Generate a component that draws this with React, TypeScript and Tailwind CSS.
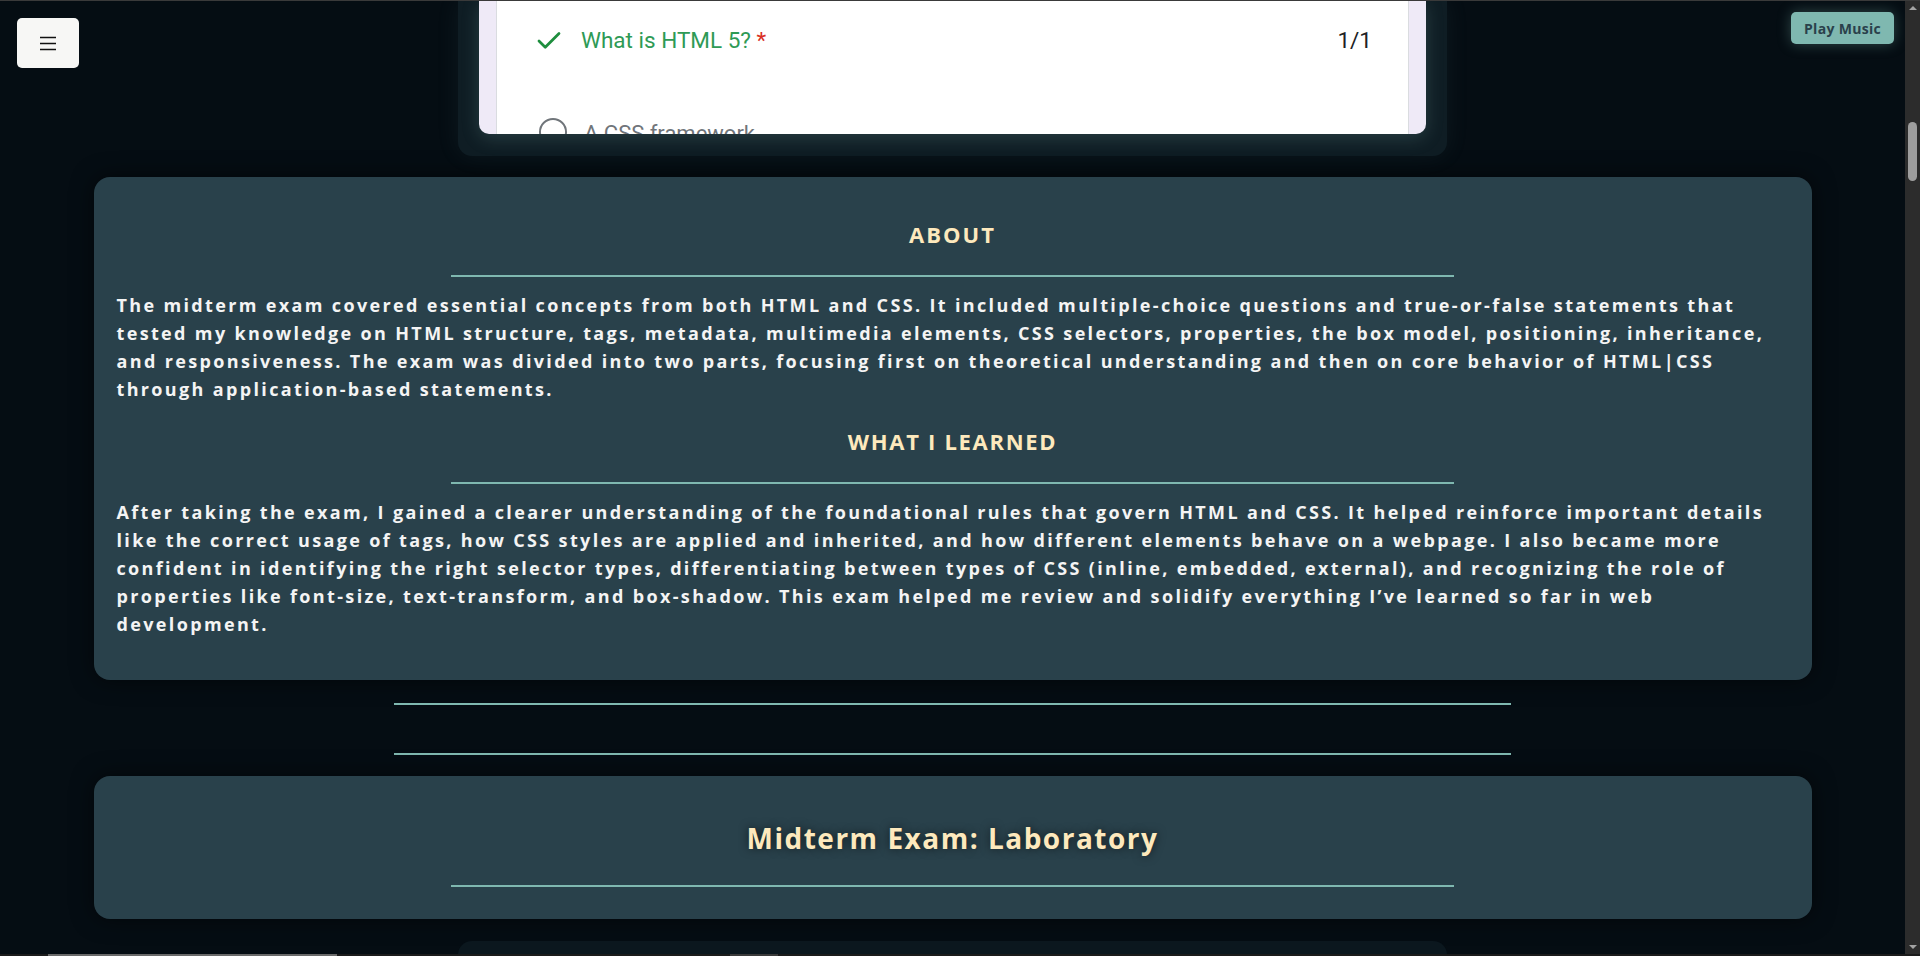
import { Check } from "lucide-react";

const ABOUT_TEXT =
  "The midterm exam covered essential concepts from both HTML and CSS. It included multiple-choice questions and true-or-false statements that tested my knowledge on HTML structure, tags, metadata, multimedia elements, CSS selectors, properties, the box model, positioning, inheritance, and responsiveness. The exam was divided into two parts, focusing first on theoretical understanding and then on core behavior of HTML|CSS through application-based statements.";

const LEARNED_TEXT =
  "After taking the exam, I gained a clearer understanding of the foundational rules that govern HTML and CSS. It helped reinforce important details like the correct usage of tags, how CSS styles are applied and inherited, and how different elements behave on a webpage. I also became more confident in identifying the right selector types, differentiating between types of CSS (inline, embedded, external), and recognizing the role of properties like font-size, text-transform, and box-shadow. This exam helped me review and solidify everything I’ve learned so far in web development.";

export default function App() {
  return (
    <div className="flex h-[956px] w-full flex-col overflow-hidden bg-[#050d13]">
      {/* browser chrome edge */}
      <div className="h-px w-full shrink-0 bg-[#3a3a3a]" />

      <div className="flex min-h-0 flex-1">
        <main className="relative min-w-0 flex-1 overflow-hidden">
          {/* Menu button */}
          <button className="absolute left-[17px] top-[17px] z-20 flex h-[50px] w-[62px] items-center justify-center rounded-[5px] bg-[#f7f7f5]">
            <svg width="16" height="15" viewBox="0 0 16 15" fill="none">
              <path d="M0 1.5h16M0 7.5h16M0 13.5h16" stroke="#111" strokeWidth="1.6" />
            </svg>
          </button>

          {/* Play music */}
          <button className="absolute right-[11px] top-[11px] z-20 flex h-[32px] w-[103px] items-center justify-center rounded-[5px] bg-[#7fb8b0] text-[14px] font-bold tracking-[0.3px] text-[#2a414b] shadow-[0_0_14px_rgba(127,184,176,0.35)] [font-family:'Open_Sans',sans-serif]">
            Play Music
          </button>

          <div className="flex flex-col items-center">
            {/* Embedded exam screenshot (scrolled) */}
            <div className="h-[155px] w-[989px] rounded-b-[14px] bg-[#0f1d24] px-[21px] shadow-[0_0_24px_rgba(127,184,176,0.08)]">
              <div className="h-[133px] overflow-hidden rounded-b-[10px] bg-[#efeaf7] px-[17px] shadow-[0_4px_18px_rgba(127,184,176,0.22)] [font-family:Roboto,'Noto_Sans',sans-serif]">
                <div className="h-full border-x border-[#dadce0] bg-white pl-[37px] pr-[36px]">
                  <div className="flex h-[80px] items-start pt-[25px]">
                    <Check size={30} strokeWidth={2.2} className="text-[#1e8e3e]" />
                    <span className="ml-[17px] text-[22.5px] leading-[28px] text-[#2e9a55]">
                      What is HTML 5? <span className="text-[#d93025]">*</span>
                    </span>
                    <span className="ml-auto text-[22.5px] leading-[28px] text-[#202124]">1/1</span>
                  </div>
                  <div className="mt-[37px] flex items-start">
                    <div className="ml-[5px] h-[28px] w-[28px] shrink-0 rounded-full border-2 border-[#70757a]" />
                    <span className="ml-[17px] mt-[3px] text-[22px] leading-[26px] text-[#70757a]">A CSS framework</span>
                  </div>
                </div>
              </div>
            </div>

            {/* About card */}
            <section className="mt-[21px] w-[1718px] rounded-2xl bg-[#29414b] px-[23px] pb-[42px] pt-[43px] shadow-[0_0_22px_rgba(0,0,0,0.55)] [font-family:'Open_Sans',sans-serif]">
              <h2 className="text-center text-[22px] font-bold leading-[28px] tracking-[2px] text-[#fde9bd]">ABOUT</h2>
              <div className="mx-auto mt-[27px] h-[2px] w-3/5 bg-[#7fb8b0]" />
              <p className="mt-[14px] text-[18px] font-bold leading-[28px] tracking-[2.35px] text-[#f4f4f4]">{ABOUT_TEXT}</p>

              <h2 className="mt-[24px] text-center text-[22px] font-bold leading-[28px] tracking-[1.7px] text-[#fde9bd]">WHAT I LEARNED</h2>
              <div className="mx-auto mt-[27px] h-[2px] w-3/5 bg-[#7fb8b0]" />
              <p className="mt-[14px] text-[18px] font-bold leading-[28px] tracking-[2.35px] text-[#f4f4f4]">{LEARNED_TEXT}</p>
            </section>

            {/* divider block */}
            <div className="mt-[23px] h-[2px] w-[1117px] bg-[#7fb8b0]" />
            <div className="mt-[48px] h-[2px] w-[1117px] bg-[#7fb8b0]" />

            {/* Laboratory card */}
            <section className="mt-[21px] w-[1718px] rounded-2xl bg-[#29414b] px-[23px] pb-[32px] pt-[44px] shadow-[0_0_22px_rgba(0,0,0,0.55)] [font-family:'Open_Sans',sans-serif]">
              <h2 className="text-center text-[28px] font-bold leading-[36px] tracking-[1.5px] text-[#fde9bd] [text-shadow:0_0_10px_rgba(0,0,0,0.6)]">
                Midterm Exam: Laboratory
              </h2>
              <div className="mx-auto mt-[29px] h-[2px] w-3/5 bg-[#7fb8b0]" />
            </section>

            {/* next embedded screenshot, cut off */}
            <div className="mt-[22px] h-[200px] w-[989px] rounded-t-[14px] bg-[#0b171e]" />
          </div>
        </main>

        {/* scrollbar */}
        <div className="flex w-[15px] shrink-0 flex-col items-center bg-[#2c2c2c]">
          <div className="mt-[5px] h-0 w-0 border-x-[4px] border-b-[4px] border-x-transparent border-b-[#a3a3a3]" />
          <div className="mt-[112px] h-[59px] w-[9px] rounded-full bg-[#9e9e9e]" />
          <div className="mt-auto mb-[5px] h-0 w-0 border-x-[4px] border-t-[4px] border-x-transparent border-t-[#a3a3a3]" />
        </div>
      </div>

      {/* bottom strip */}
      <div className="flex h-[2px] w-full shrink-0 bg-[#1b1b1b]">
        <div className="ml-[48px] h-full w-[289px] bg-[#6a6a6a]" />
        <div className="ml-[393px] h-full w-[48px] bg-[#3a3a3a]" />
      </div>
    </div>
  );
}
